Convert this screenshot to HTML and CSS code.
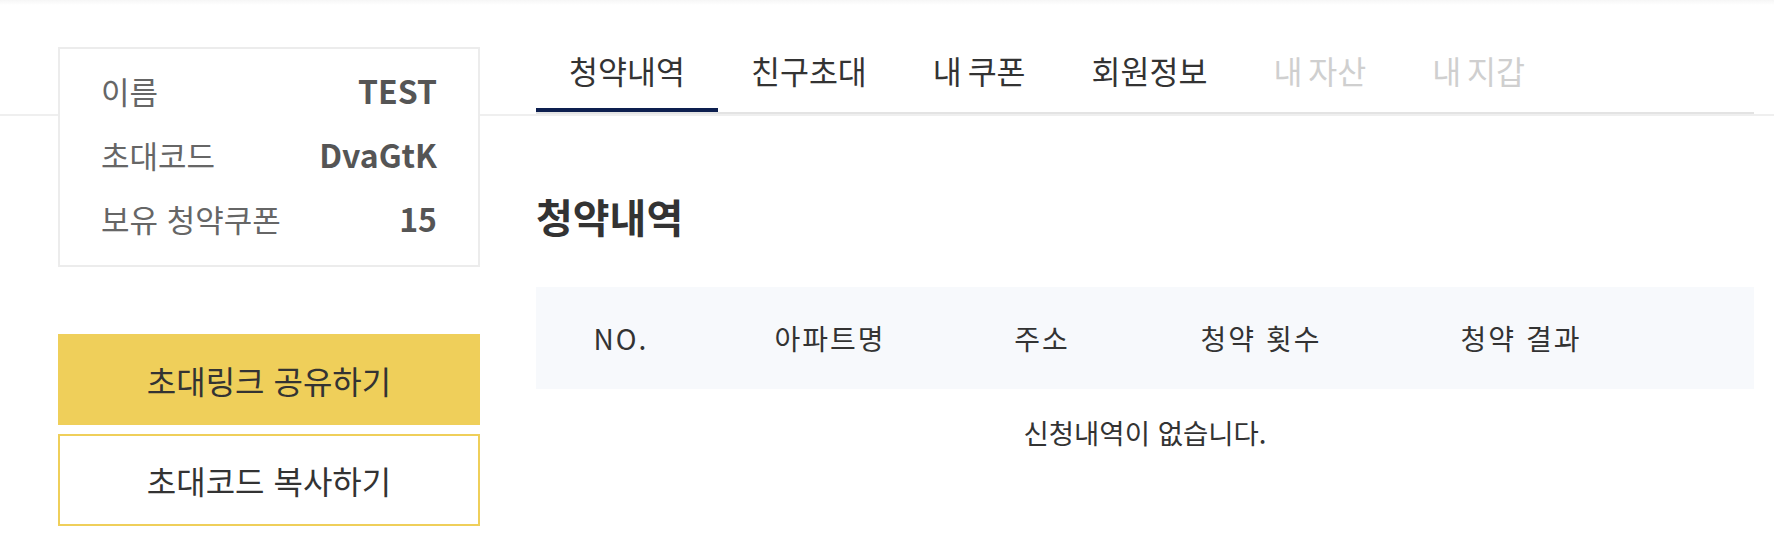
FILE: index.html
```html
<!DOCTYPE html>
<html lang="ko">
<head>
    <meta charset="UTF-8">
    <meta name="viewport" content="width=device-width, initial-scale=1.0">
    <title>마이페이지 - 청약내역</title>
    <link rel="stylesheet" href="styles.css">
</head>
<body>
    <div class="mypage">
        <!-- Left side: member summary + invite buttons -->
        <aside class="sidebar">
            <dl class="member-info">
                <div class="info-row">
                    <dt>이름</dt>
                    <dd>TEST</dd>
                </div>
                <div class="info-row">
                    <dt>초대코드</dt>
                    <dd>DvaGtK</dd>
                </div>
                <div class="info-row">
                    <dt>보유 청약쿠폰</dt>
                    <dd>15</dd>
                </div>
            </dl>

            <div class="invite-actions">
                <button class="btn btn-share">초대링크 공유하기</button>
                <button class="btn btn-copy">초대코드 복사하기</button>
            </div>
        </aside>

        <!-- Right side: tabs + content -->
        <main class="content">
            <ul class="tabs">
                <li class="tab active">청약내역</li>
                <li class="tab">친구초대</li>
                <li class="tab">내 쿠폰</li>
                <li class="tab">회원정보</li>
                <li class="tab disabled">내 자산</li>
                <li class="tab disabled">내 지갑</li>
            </ul>

            <h2 class="section-title">청약내역</h2>

            <div class="history-table">
                <div class="table-head">
                    <span>NO.</span>
                    <span>아파트명</span>
                    <span>주소</span>
                    <span>청약 횟수</span>
                    <span>청약 결과</span>
                    <span></span>
                </div>
                <p class="table-empty">신청내역이 없습니다.</p>
            </div>
        </main>
    </div>
</body>
</html>
```

FILE: styles.css
```css
/* Base */
html, body {
    margin: 0;
    padding: 0;
}

body {
    font-family: "Noto Sans CJK KR", "Noto Sans", sans-serif;
    color: #333;
    /* faint header shadow at the top + the page divider line under the tabs */
    background:
        linear-gradient(#f6f6f6, #ffffff) top left / 100% 5px no-repeat,
        linear-gradient(#efefef, #efefef) 0 114px / 100% 2px no-repeat,
        #ffffff;
    min-height: 100vh;
}

.mypage {
    display: flex;
    align-items: flex-start;
    gap: 56px;
    padding: 47px 20px 0 58px;
}

/* Sidebar */
.sidebar {
    width: 422px;
    flex-shrink: 0;
}

.member-info {
    margin: 0;
    padding: 9px 41px 15px;
    background-color: #ffffff;
    border: 2px solid #ececec;
    position: relative; /* sits over the page divider line */
}

.info-row {
    display: flex;
    justify-content: space-between;
    align-items: center;
    height: 64px;
}

.info-row dt {
    font-size: 31px;
    color: #666;
}

.info-row dd {
    margin: 0;
    font-size: 32px;
    font-weight: 700;
    color: #555;
}

.invite-actions {
    margin-top: 67px;
    display: flex;
    flex-direction: column;
    gap: 9px;
}

.btn {
    display: block;
    width: 100%;
    height: 92px;
    margin: 0;
    padding: 0;
    font-family: inherit;
    font-size: 32px;
    color: #333;
    border: none;
    cursor: pointer;
}

.btn-share {
    height: 91px;
    background-color: #efcf5a;
}

.btn-copy {
    background-color: #ffffff;
    border: 2px solid #efcf5a;
}

/* Main content */
.content {
    flex: 1;
    min-width: 0;
}

.tabs {
    display: flex;
    margin: 0;
    padding: 0;
    list-style: none;
    border-bottom: 2px solid #e3e3e3;
}

.tab {
    padding: 2px 33px 17px;
    font-size: 31.5px;
    line-height: 42px;
    word-spacing: -3px;
    color: #333;
    border-bottom: 4px solid transparent;
    cursor: pointer;
}

.tab.active {
    border-bottom-color: #0d1f4f;
}

.tab.disabled {
    color: #cfcfcf;
    cursor: default;
}

.section-title {
    margin: 78px 0 47px;
    font-size: 40px;
    line-height: 48px;
    font-weight: 700;
    color: #333;
}

.history-table {
    width: 100%;
}

.table-head {
    display: grid;
    grid-template-columns: 170px 248px 176px 262px 258px 1fr;
    align-items: center;
    height: 102px;
    background-color: #f7f9fc;
    font-size: 28px;
    letter-spacing: 2px;
    color: #333;
}

.table-head span {
    text-align: center;
}

.table-empty {
    margin: 0;
    padding-top: 23px;
    font-size: 27.5px;
    line-height: 40px;
    text-align: center;
    color: #333;
}
```
